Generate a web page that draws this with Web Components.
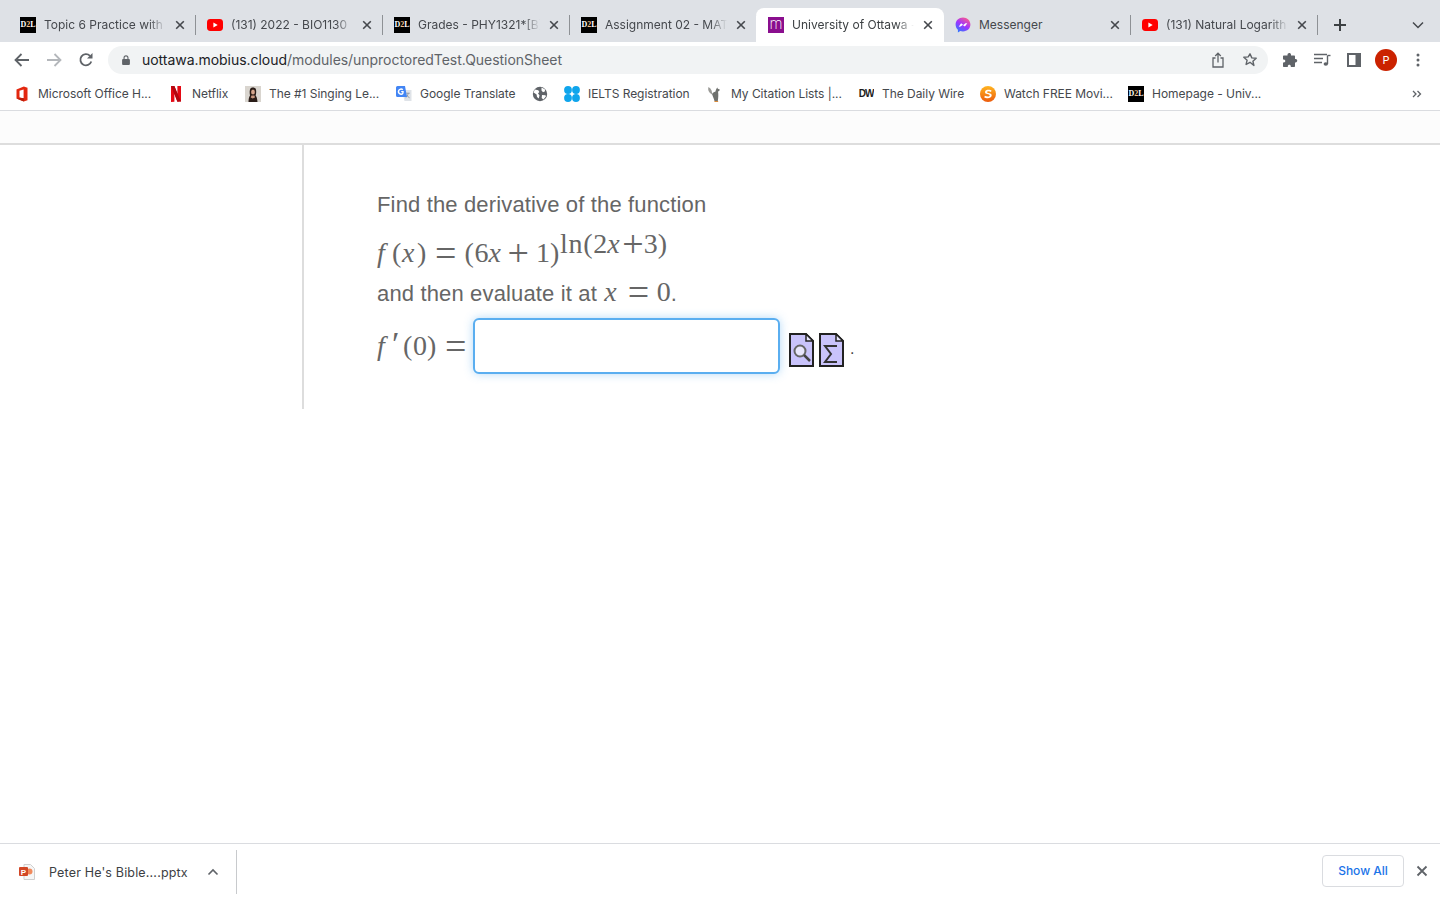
<!DOCTYPE html>
<html>
<head>
<meta charset="utf-8">
<title>University of Ottawa</title>
<style>
    html, body { margin: 0; height: 100%; overflow: hidden; background: #fff; }
    body { display: flex; flex-direction: column; height: 900px; font-family: Inter, "Liberation Sans", sans-serif; }
</style>
</head>
<body>
<tab-strip>
    <browser-tab icon="d2l" label="Topic 6 Practice with"></browser-tab>
    <browser-tab icon="yt" label="(131) 2022 - BIO1130"></browser-tab>
    <browser-tab icon="d2l" label="Grades - PHY1321*[B]"></browser-tab>
    <browser-tab icon="d2l" label="Assignment 02 - MAT"></browser-tab>
    <browser-tab icon="mobius" label="University of Ottawa -" active></browser-tab>
    <browser-tab icon="messenger" label="Messenger" nofade></browser-tab>
    <browser-tab icon="yt" label="(131) Natural Logarith"></browser-tab>
</tab-strip>
<nav-toolbar></nav-toolbar>
<bookmark-bar>
    <bookmark-item icon="office" label="Microsoft Office H..." w="114"></bookmark-item>
    <bookmark-item icon="netflix" label="Netflix" w="37"></bookmark-item>
    <bookmark-item icon="singer" label="The #1 Singing Le..." w="111"></bookmark-item>
    <bookmark-item icon="gtranslate" label="Google Translate" w="96"></bookmark-item>
    <bookmark-item icon="globe"></bookmark-item>
    <bookmark-item icon="ielts" label="IELTS Registration" w="103"></bookmark-item>
    <bookmark-item icon="squirrel" label="My Citation Lists |..." w="111"></bookmark-item>
    <bookmark-item icon="dw" label="The Daily Wire" w="82"></bookmark-item>
    <bookmark-item icon="soap" label="Watch FREE Movi..." w="108"></bookmark-item>
    <bookmark-item icon="d2l" label="Homepage - Univ..." w="109"></bookmark-item>
</bookmark-bar>
<question-page></question-page>
<downloads-shelf></downloads-shelf>

<script>
const ICONS = {
    yt: `<svg viewBox="0 0 16 16" width="16" height="16"><rect y="2" width="16" height="12" rx="3.4" fill="#f00"/><path d="M6.4 5.5v5l4.3-2.5z" fill="#fff"/></svg>`,
    messenger: `<svg viewBox="0 0 16 16" width="16" height="16"><defs><linearGradient id="mg" x1="0.2" y1="1" x2="0.8" y2="0"><stop offset="0" stop-color="#2a7bff"/><stop offset=".5" stop-color="#a033ff"/><stop offset="1" stop-color="#ff5c87"/></linearGradient></defs><path d="M8 .6C3.8.6.6 3.6.6 7.6c0 2.1.9 3.9 2.3 5.200v2.600l2.400-1.300c.8.2 1.700.4 2.700.4 4.200 0 7.400-3 7.400-6.900S12.200.6 8 .6z" fill="url(#mg)"/><path d="M3.700 9.800 6.100 6.300l2.200 1.700 2.200-1.700 1.800 0-2.400 3.300-2.200-1.700-2.200 1.700z" fill="#fff"/></svg>`,
    office: `<svg viewBox="0 0 16 16" width="16" height="16"><path d="M2.500 3.500 9.800.6 13.500 1.800v12.400L9.800 15.400 2.500 12.500z" fill="#e3270f"/><path d="M5.500 4.700 9.600 3.600v8.800L5.500 11.300z" fill="#fff"/><path d="M2.500 12.500 9.800 11.900v3.500z" fill="#b51e0b"/></svg>`,
    netflix: `<svg viewBox="0 0 16 16" width="16" height="16"><path d="M3 0h3.400l3 8V0H13v15.500c-1 0-2.400.1-3.600.3L6.400 7.500v8.300L3 16z" fill="#e50914"/><path d="M3 0h3.400l6.600 15.500c-1 0-2.400.1-3.600.3z" fill="#b20710"/></svg>`,
    singer: `<svg viewBox="0 0 16 16" width="16" height="16"><rect width="16" height="16" fill="#d9d5cf"/><path d="M3.500 16c0-3 .5-5 1.500-6.500C4.500 7 4.500 4 5.500 2.500 6.500 1 10 1 10.800 3c.7 2 .4 5-.2 6.500 1.300 1.500 1.700 3.500 1.900 6.500z" fill="#2a1d18"/><ellipse cx="8" cy="6" rx="1.900" ry="2.600" fill="#d5a58c"/><path d="M6.500 9.500h3l.5 2-2.300 1-2-1z" fill="#c99880"/></svg>`,
    gtranslate: `<svg viewBox="0 0 16 16" width="16" height="16"><path d="M6 4h9.500v11H8.500z" fill="#dfe3e8"/><path d="M10.200 7.200h3.600M12 7v1c-.2 1.500-1.200 3-2.400 3.800M10.600 8.800c.6 1.300 1.700 2.400 3 3" stroke="#8a9099" stroke-width=".8" fill="none"/><path d="M1.500 0H9l2 11H1.500A1.500 1.500 0 0 1 0 9.500v-8A1.500 1.500 0 0 1 1.500 0z" fill="#4285f4"/><path d="M7.700 5H5.200v1.300h1.300c-.2.800-.7 1.200-1.400 1.200a1.900 1.900 0 0 1 0-3.800c.5 0 .9.200 1.200.5l1-1a3.300 3.300 0 1 0-2.200 5.700c1.900 0 2.800-1.400 2.600-3.900z" fill="#fff"/></svg>`,
    globe: `<svg viewBox="0 0 16 16" width="16" height="16"><circle cx="8" cy="8" r="7.200" fill="#5f6368"/><path d="M2.800 3.600 6.300 4.200 7.300 6 6 7.500 7.500 9.300 6.800 12.500 5 11 4.600 8.500 1.600 6.500zM9.500 1.500l3.300 1.700.3 2L11 6.300 9.500 4.500zM10 9l3.500.2.400 1.300-2.500 3-1.700-1.500z" fill="#fff"/></svg>`,
    ielts: `<svg viewBox="0 0 16 16" width="16" height="16"><g fill="#0fa5ec"><circle cx="4" cy="4" r="3.900"/><circle cx="12" cy="4" r="3.900"/><circle cx="4" cy="12" r="3.900"/><circle cx="12" cy="12" r="3.900"/></g></svg>`,
    squirrel: `<svg viewBox="0 0 16 16" width="16" height="16"><path d="M1.500 1C.5 4 2 7 5 8.500 5.500 6 4.500 2.500 1.500 1z" fill="#9a9a96"/><path d="M5 8c.5-1 2-2 3.500-2.500C8.800 4 9.500 2 10.300 1.500l.5 1.300 2 .7-.6 1.500-1.200.6c.5 2.500.4 6-.2 9.500H7.500C6.800 12 5.600 10 5 8z" fill="#6f716e"/><path d="M7.500 15h3.600v1H7.300z" fill="#d98a3a"/></svg>`,
    soap: `<svg viewBox="0 0 16 16" width="16" height="16"><defs><linearGradient id="sg" x1="0" y1="0" x2="0" y2="1"><stop offset="0" stop-color="#ffb521"/><stop offset="1" stop-color="#ec5b0d"/></linearGradient></defs><circle cx="8" cy="8" r="8" fill="url(#sg)"/><path d="M11.500 4.600C10.500 3.800 5.500 3 5 6c-.4 2.600 5 1.600 4.700 3.500-.2 1.400-3 1-4.900.2l-.5 1.700c2 1.100 7 1.400 7.400-1.900.3-3-5-2-4.700-3.500.2-1 2.500-.7 4-.1z" fill="#fff"/></svg>`,
    lock: `<svg viewBox="0 0 12 12" width="12" height="12"><path d="M3.500 5V3.800a2.500 2.500 0 0 1 5 0V5h.5c.5 0 .9.400.9.900v4.200c0 .5-.4.900-.9.900H3c-.5 0-.9-.4-.9-.9V5.900c0-.5.4-.9.900-.9zm1.100 0h2.800V3.800a1.400 1.400 0 0 0-2.800 0z" fill="#5f6368"/></svg>`,
    close: `<svg viewBox="0 0 16 16" width="16" height="16"><path d="M4.200 4.200l7.600 7.600M11.800 4.200l-7.600 7.600" stroke="#45484d" stroke-width="1.600" fill="none"/></svg>`,
};

// small favicons that carry letters stay real text
const textIcon = (kind) => {
    if (kind === "d2l") return `<span class="ti d2l">D<i>2</i>L</span>`;
    if (kind === "mobius") return `<span class="ti mob"><b>m</b></span>`;
    if (kind === "dw") return `<span class="ti dw">DW</span>`;
    return ICONS[kind] || "";
};

const ICON_CSS = `
    .ico { width: 16px; height: 16px; flex: none; display: block; }
    .ico svg { display: block; }
    .ti { display: flex; width: 16px; height: 16px; align-items: center; justify-content: center; overflow: hidden; }
    .d2l { background: #000; color: #fff; font: bold 8px/16px "Liberation Serif", serif; letter-spacing: -.1px; }
    .d2l i { font-style: normal; color: #f7c08a; }
    .mob { background: #8a0e8e; color: #fff; font: 200 15px/14px Inter, sans-serif; align-items: flex-start; }
    .mob b { font-weight: 200; }
    .dw { color: #1c1c1c; font: bold 10px/16px "Liberation Sans", sans-serif; letter-spacing: -1px; }
`;

class TabStrip extends HTMLElement {
    constructor() {
        super();
        this.attachShadow({ mode: "open" }).innerHTML = `
            <style>
                :host { display: flex; flex: none; height: 42px; background: #dee1e6; padding: 8px 0 0 8px; box-sizing: border-box; align-items: stretch; color: #45484d; }
                .plus { flex: none; width: 26px; height: 34px; margin-left: 10px; display: flex; align-items: center; justify-content: center; }
                .chev { flex: none; margin-left: auto; width: 44px; height: 34px; display: flex; align-items: center; justify-content: center; }
                svg { display: block; }
            </style>
            <slot></slot>
            <div class="plus"><svg width="14" height="14" viewBox="0 0 14 14"><path d="M7 1v12M1 7h12" stroke="#3c4043" stroke-width="2"/></svg></div>
            <div class="chev"><svg width="12" height="8" viewBox="0 0 12 8"><path d="M1 1.500l5 5 5-5" stroke="#45484d" stroke-width="1.500" fill="none"/></svg></div>
        `;
    }
}

class BrowserTab extends HTMLElement {
    constructor() {
        super();
        this.attachShadow({ mode: "open" });
    }
    connectedCallback() {
        const label = this.getAttribute("label") || "";
        const fade = this.hasAttribute("nofade") ? "" : "fade";
        this.shadowRoot.innerHTML = `
            <style>
                :host { display: flex; flex: none; width: 187px; height: 34px; box-sizing: border-box; align-items: center; padding: 0 7px 0 12px; position: relative; font-size: 12px; color: #45484d; }
                :host(:not([active]))::after { content: ""; position: absolute; right: -1px; top: 7px; height: 20px; width: 1px; background: #8e9195; }
                :host(:has(+ [active]))::after { display: none; }
                :host([active]) { width: 188px; margin-right: -1px; background: #fff; border-radius: 8px 8px 0 0; color: #3c4043; z-index: 1; }
                ${ICON_CSS}
                .title { flex: 1; margin: 0 0 2px 8px; white-space: nowrap; overflow: hidden; }
                .title.fade { -webkit-mask-image: linear-gradient(90deg, #000 calc(100% - 20px), transparent calc(100% - 3px)); mask-image: linear-gradient(90deg, #000 calc(100% - 20px), transparent calc(100% - 3px)); }
                .x { flex: none; width: 16px; height: 16px; margin-left: 3px; }
                :host([active]) .x { margin-right: 1px; }
                .x svg { display: block; }
            </style>
            <span class="ico">${textIcon(this.getAttribute("icon"))}</span>
            <span class="title ${fade}">${label}</span>
            <span class="x">${ICONS.close}</span>
        `;
    }
}

class NavToolbar extends HTMLElement {
    constructor() {
        super();
        this.attachShadow({ mode: "open" }).innerHTML = `
            <style>
                :host { display: flex; flex: none; height: 36px; box-sizing: border-box; background: #fff; align-items: center; padding: 0 0 0 6px; }
                .btn { flex: none; width: 32px; height: 28px; display: flex; align-items: center; justify-content: center; }
                svg { display: block; }
                .omni { flex: none; width: 1160px; height: 28px; margin-left: 6px; background: #f1f3f4; border-radius: 14px; display: flex; align-items: center; box-sizing: border-box; padding: 0 2px 0 12px; font-size: 14px; letter-spacing: -.04px; }
                .url { flex: 1; margin: 0 0 2px 10px; color: #5f6368; white-space: nowrap; }
                .url b { font-weight: 400; color: #202124; }
                .tools { display: flex; padding-left: 6px; }
            </style>
            <div class="btn"><svg width="16" height="14" viewBox="0 0 16 14"><path d="M15 7H2M7.500 1 1.500 7l6 6" stroke="#5f6368" stroke-width="1.800" fill="none"/></svg></div>
            <div class="btn"><svg width="16" height="14" viewBox="0 0 16 14"><path d="M1 7h13M8.500 1l6 6-6 6" stroke="#b4b7bb" stroke-width="1.800" fill="none"/></svg></div>
            <div class="btn"><svg width="16" height="16" viewBox="0 0 16 16"><path d="M13.300 9.500A5.600 5.600 0 1 1 12 3.800" stroke="#5f6368" stroke-width="1.800" fill="none"/><path d="M14.500 1v5.500H9z" fill="#5f6368"/></svg></div>
            <div class="omni">
                ${ICONS.lock}
                <span class="url"><b>uottawa.mobius.cloud</b>/modules/unproctoredTest.QuestionSheet</span>
                <div class="btn"><svg width="14" height="16" viewBox="0 0 14 16"><path d="M4.500 6H2v9h10V6H9.500M7 10.500V1.500M4.200 4 7 1.200 9.800 4" stroke="#5f6368" stroke-width="1.300" fill="none"/></svg></div>
                <div class="btn"><svg width="16" height="16" viewBox="0 0 16 16"><path d="M8 1.800l1.800 4.100 4.400.4-3.300 2.900 1 4.300L8 10.300l-3.900 2.200 1-4.300-3.300-2.900 4.400-.4z" stroke="#5f6368" stroke-width="1.400" fill="none" stroke-linejoin="round"/></svg></div>
            </div>
            <div class="tools">
                <div class="btn"><svg width="16" height="16" viewBox="0 0 16 16"><path d="M6 1.500c1-1 3-.6 3 1.200V3.500h3c.6 0 1 .4 1 1V7h.6c2.200 0 2.200 3.400 0 3.400H13V14c0 .6-.4 1-1 1H8.800v-.8c0-2-3-2-3 0v.8H2c-.6 0-1-.4-1-1v-3.500h.8c2 0 2-3 0-3H1V4.500c0-.6.4-1 1-1h3.500v-.8c0-.5.2-.9.500-1.200z" fill="#5f6368"/></svg></div>
                <div class="btn"><svg width="18" height="14" viewBox="0 0 18 14"><path d="M1 1.500h13M1 5.500h9M1 9.500h8" stroke="#5f6368" stroke-width="1.300"/><path d="M14.500 2.500v8.500" stroke="#5f6368" stroke-width="1.400"/><path d="M14.500 2.500h3" stroke="#5f6368" stroke-width="1.400"/><ellipse cx="12.800" cy="11" rx="2.200" ry="1.800" fill="#5f6368"/></svg></div>
                <div class="btn"><svg width="14" height="14" viewBox="0 0 14 14"><path fill-rule="evenodd" d="M0 0h14v14H0zM2 2v10h6.500V2z" fill="#5f6368"/></svg></div>
                <div class="btn"><profile-badge></profile-badge></div>
                <div class="btn"><svg width="4" height="14" viewBox="0 0 4 14"><circle cx="2" cy="2" r="1.500" fill="#5f6368"/><circle cx="2" cy="7" r="1.500" fill="#5f6368"/><circle cx="2" cy="12" r="1.500" fill="#5f6368"/></svg></div>
            </div>
        `;
    }
}

class ProfileBadge extends HTMLElement {
    constructor() {
        super();
        this.attachShadow({ mode: "open" }).innerHTML = `
            <style>
                :host { display: flex; width: 22px; height: 22px; border-radius: 50%; background: #cb2200; color: #fff; font: 11px/22px Inter, sans-serif; align-items: center; justify-content: center; }
            </style>
            P
        `;
    }
}

class BookmarkBar extends HTMLElement {
    constructor() {
        super();
        this.attachShadow({ mode: "open" }).innerHTML = `
            <style>
                :host { display: flex; flex: none; height: 33px; box-sizing: border-box; background: #fff; border-bottom: 1px solid #dadce0; align-items: center; padding: 0 0 1px 14px; }
                .more { margin-left: auto; width: 46px; display: flex; justify-content: center; }
                svg { display: block; }
            </style>
            <slot></slot>
            <div class="more"><svg width="10" height="8" viewBox="0 0 10 8"><path d="M1 1l3 3-3 3M5.500 1l3 3-3 3" stroke="#5f6368" stroke-width="1.300" fill="none"/></svg></div>
        `;
    }
}

class BookmarkItem extends HTMLElement {
    constructor() {
        super();
        this.attachShadow({ mode: "open" });
    }
    connectedCallback() {
        const label = this.getAttribute("label");
        const w = this.getAttribute("w");
        this.shadowRoot.innerHTML = `
            <style>
                :host { display: flex; flex: none; align-items: center; height: 28px; margin-right: 16px; font-size: 12px; letter-spacing: -.04px; color: #45484d; white-space: nowrap; }
                ${ICON_CSS}
                .lb { margin-left: 8px; width: ${w}px; }
            </style>
            <span class="ico">${textIcon(this.getAttribute("icon"))}</span>
            ${label ? `<span class="lb">${label}</span>` : ""}
        `;
    }
}

class QuestionPage extends HTMLElement {
    constructor() {
        super();
        this.attachShadow({ mode: "open" }).innerHTML = `
            <style>
                :host { display: flex; flex-direction: column; flex: 1; min-height: 0; background: #fff; color: #666; }
                .banner { flex: none; height: 32px; background: #fcfcfc; border-bottom: 2px solid #ddd; }
                .body { display: flex; align-items: flex-start; flex: 1; }
                .rail { flex: none; width: 302px; height: 264px; border-right: 2px solid #ddd; }
                .sheet { padding: 47px 0 0 73px; font: 22px/26px "Liberation Sans", sans-serif; letter-spacing: .15px; }
                p { margin: 0; }
                .m { font-family: "Liberation Serif", serif; font-size: 28px; white-space: nowrap; letter-spacing: .7px; }
                .m i.f { margin-right: 6.500px; }
                .m i.x { letter-spacing: 2.600px; }
                .m .op { font-size: 38px; line-height: 0; letter-spacing: 0; margin: 0 8px; vertical-align: -4px; }
                .m .tight { margin: 0; }
                .m .d { letter-spacing: 0; }
                .eq { display: block; margin-top: 15px; height: 40px; line-height: 40px; }
                .eq sup { line-height: 0; vertical-align: 9px; font-size: 28px; }
                .then { margin-top: 6px; }
                .then .m { margin-left: 1px; }
                .answer { display: flex; align-items: center; margin-top: 11px; }
                .answer .m { flex: none; width: 96px; }
                .prime { display: inline-block; width: 11px; font-size: 34px; line-height: 0; letter-spacing: 0; }
                .box { flex: none; width: 307px; height: 56px; box-sizing: border-box; border: 2px solid #5aaef0; border-radius: 6px; background: #fff; box-shadow: 0 0 10px rgba(90,174,240,.45); }
                .tools { display: flex; gap: 5px; margin-left: 9px; margin-top: 7px; }
                .tools svg { display: block; }
                .dot { margin: 6px 0 0 6px; font-size: 16px; color: #444; }
            </style>
            <div class="banner"></div>
            <div class="body">
                <div class="rail"></div>
                <div class="sheet">
                    <p>Find the derivative of the function</p>
                    <span class="m eq"><i class="f">f</i>(<i class="x">x</i>)<span class="op">=</span>(<span class="d">6</span><i class="x">x</i><span class="op" style="margin:0 7px 0 4px">+</span><span class="d">1</span>)<sup>ln(<span class="d">2</span><i class="x">x</i><span class="op tight">+</span><span class="d">3</span>)</sup></span>
                    <p class="then">and then evaluate it at <span class="m"><i class="x">x</i><span class="op" style="margin:0 7.500px 0 8.500px">=</span><span class="d">0</span></span>.</p>
                    <div class="answer">
                        <span class="m"><i class="f">f</i><span class="prime">&#8242;</span>(<span class="d">0</span>)<span class="op">=</span></span>
                        <div class="box"></div>
                        <div class="tools">
                            <svg width="25" height="34" viewBox="0 0 25 34"><path d="M1 1h16l7 7v25H1z" fill="#c9c3fb" stroke="#222" stroke-width="2"/><path d="M17 1v7h7z" fill="#e8e6fb" stroke="#222" stroke-width="1.500"/><circle cx="11" cy="18" r="5.500" fill="#e8e6fb" stroke="#666" stroke-width="2"/><path d="M15 22l6 6" stroke="#444" stroke-width="2.500"/></svg>
                            <svg width="25" height="34" viewBox="0 0 25 34"><path d="M1 1h16l7 7v25H1z" fill="#c9c3fb" stroke="#222" stroke-width="2"/><path d="M17 1v7h7z" fill="#e8e6fb" stroke="#222" stroke-width="1.500"/><path d="M18 13H6l6 8-6 8h12" fill="none" stroke="#333" stroke-width="2"/></svg>
                        </div>
                        <span class="dot">.</span>
                    </div>
                </div>
            </div>
        `;
    }
}

class DownloadsShelf extends HTMLElement {
    constructor() {
        super();
        this.attachShadow({ mode: "open" }).innerHTML = `
            <style>
                :host { display: flex; flex: none; height: 57px; box-sizing: border-box; border-top: 1px solid #dadce0; background: #fff; align-items: center; padding: 0 10px 1px 19px; font-size: 12.500px; color: #3c4043; }
                svg { display: block; flex: none; }
                .name { margin: 2px 0 0 14px; letter-spacing: .17px; white-space: nowrap; }
                .chev { margin-left: 19px; }
                .sep { width: 1px; height: 44px; background: #c8cacd; margin-left: 17px; }
                .all { margin: 0 0 2px auto; height: 32px; width: 82px; box-sizing: border-box; padding-bottom: 1px; border: 1px solid #dadce0; border-radius: 4px; display: flex; align-items: center; justify-content: center; font-weight: 500; font-size: 12px; color: #1a73e8; }
                .x { margin: 0 0 2px 10px; }
            </style>
            <svg width="16" height="16" viewBox="0 0 16 16"><path d="M5 .500h6.500l4 4v11H5z" fill="#f6f6f6" stroke="#cfcfcf"/><circle cx="10.500" cy="7.500" r="3" fill="#f08a5d"/><rect x="0" y="3" width="9" height="9" rx="1" fill="#d24726"/><text x="4.500" y="10.500" text-anchor="middle" font-family="Liberation Sans" font-weight="700" font-size="8" fill="#fff">P</text></svg>
            <span class="name">Peter He's Bible....pptx</span>
            <svg class="chev" width="12" height="8" viewBox="0 0 12 8"><path d="M1.500 6.500 6 2l4.500 4.500" stroke="#5f6368" stroke-width="1.600" fill="none"/></svg>
            <span class="sep"></span>
            <span class="all">Show All</span>
            <svg class="x" width="16" height="16" viewBox="0 0 16 16"><path d="M3.500 3.500l9 9M12.500 3.500l-9 9" stroke="#5f6368" stroke-width="1.800"/></svg>
        `;
    }
}

customElements.define("tab-strip", TabStrip);
customElements.define("browser-tab", BrowserTab);
customElements.define("profile-badge", ProfileBadge);
customElements.define("nav-toolbar", NavToolbar);
customElements.define("bookmark-bar", BookmarkBar);
customElements.define("bookmark-item", BookmarkItem);
customElements.define("question-page", QuestionPage);
customElements.define("downloads-shelf", DownloadsShelf);
</script>
</body>
</html>
